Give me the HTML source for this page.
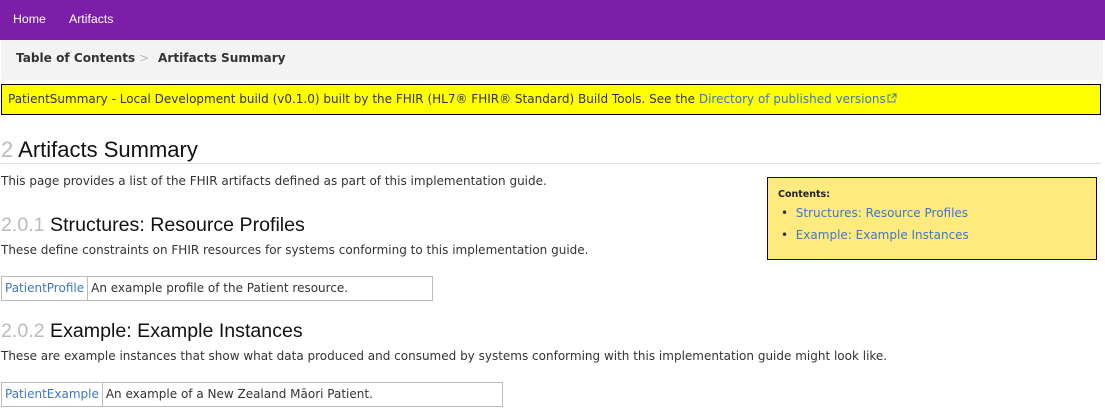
<!DOCTYPE html>
<html><head><meta charset="utf-8"><style>
*{margin:0;padding:0;box-sizing:border-box}
body{width:1105px;height:410px;overflow:hidden;background:#fff;font-family:"DejaVu Sans",Verdana,sans-serif;font-size:12px;color:#333;position:relative}
.abs{position:absolute;white-space:nowrap}
.nav{position:absolute;left:0;top:0;width:1105px;height:40px;background:#7b1fa9}
.nav span{position:absolute;top:12px;color:#fff;font-family:"Liberation Sans",Arial,sans-serif;font-size:12.3px}
.bc{position:absolute;left:1px;top:40px;width:1102px;height:40px;background:#f3f3f3;border-radius:0 0 3px 3px}
.bc span{position:absolute;top:11px;font-weight:bold;font-size:12.1px;color:#333}
.ban{position:absolute;left:1px;top:84px;width:1100px;height:31px;background:#ffff00;border:1px solid #000;padding:7px 0 0 6px;white-space:nowrap}
a{color:#4078c0;text-decoration:none}
h{position:absolute;font-family:"Liberation Sans",Arial,sans-serif;color:#111;white-space:nowrap}
h b{color:#bbb;font-weight:normal}
.hr{position:absolute;left:0;top:163px;width:1101px;height:1px;background:#ddd}
.toc{position:absolute;left:767px;top:177px;width:330px;height:83px;background:#ffea80;border:1px solid #000080}
table{position:absolute;border-collapse:collapse}
td{border:1px solid #bbb;padding:2px 3px 4px;height:24px;white-space:nowrap}
</style></head><body>
<div class="nav"><span style="left:13px">Home</span><span style="left:69px">Artifacts</span></div>
<div class="bc"><span style="left:15px">Table of Contents</span><span style="left:138px;color:#bbb;font-weight:normal">&gt;</span><span style="left:157px">Artifacts Summary</span></div>
<div class="ban">PatientSummary - Local Development build (v0.1.0) built by the FHIR (HL7® FHIR® Standard) Build Tools. See the <a>Directory of published versions</a><svg width="10" height="10" viewBox="0 0 10 10" style="margin-left:1px"><path d="M4 2H1v7h7V6M5 1h4v4M9 1L4.5 5.5" fill="none" stroke="#4078c0" stroke-width="1"/></svg></div>
<h style="left:1px;top:137px;font-size:22px"><b>2</b> Artifacts Summary</h>
<div class="hr"></div>
<div class="abs" style="left:1px;top:174px">This page provides a list of the FHIR artifacts defined as part of this implementation guide.</div>
<div class="toc">
<div class="abs" style="left:10px;top:11px;font-weight:bold;font-size:9.5px;color:#222">Contents:</div>
<div class="abs" style="left:13px;top:28px">•&nbsp;&nbsp;<a>Structures: Resource Profiles</a></div>
<div class="abs" style="left:13px;top:50px">•&nbsp;&nbsp;<a>Example: Example Instances</a></div>
</div>
<h style="left:1px;top:214px;font-size:19.6px"><b>2.0.1</b> Structures: Resource Profiles</h>
<div class="abs" style="left:1px;top:243px">These define constraints on FHIR resources for systems conforming to this implementation guide.</div>
<table style="left:1px;top:276px;width:432px"><tr><td style="width:86px"><a>PatientProfile</a></td><td>An example profile of the Patient resource.</td></tr></table>
<h style="left:1px;top:320px;font-size:19.6px"><b>2.0.2</b> Example: Example Instances</h>
<div class="abs" style="left:1px;top:349px">These are example instances that show what data produced and consumed by systems conforming with this implementation guide might look like.</div>
<table style="left:1px;top:382px;width:502px"><tr><td style="width:100px"><a>PatientExample</a></td><td>An example of a New Zealand Māori Patient.</td></tr></table>
</body></html>
